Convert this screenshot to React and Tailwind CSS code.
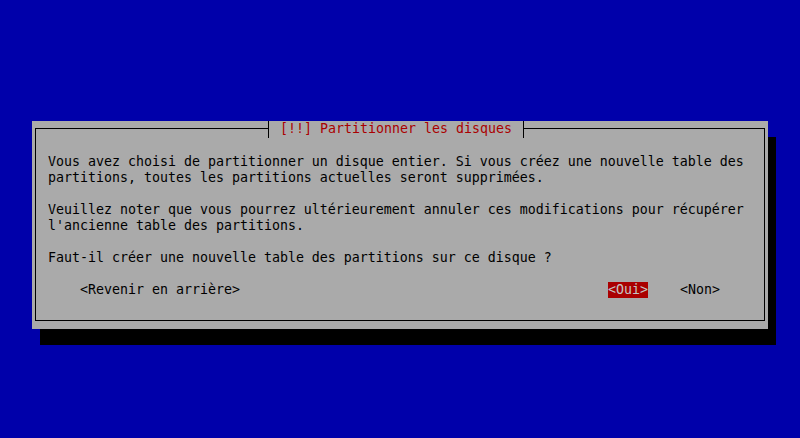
const MONO = "font-['DejaVu_Sans_Mono',monospace] text-[13.29px] leading-[16px] whitespace-pre"

const LINES = [
  'Vous avez choisi de partitionner un disque entier. Si vous créez une nouvelle table des',
  'partitions, toutes les partitions actuelles seront supprimées.',
  '',
  'Veuillez noter que vous pourrez ultérieurement annuler ces modifications pour récupérer',
  "l'ancienne table des partitions.",
  '',
  'Faut-il créer une nouvelle table des partitions sur ce disque ?',
  '',
]

export default function App() {
  return (
    <div className={`w-[800px] h-[438px] bg-[#0000aa] pt-[121px] pl-[32px] overflow-hidden ${MONO}`}>
      {/* dialog window with its text-mode shadow */}
      <div className="w-[736px] h-[208px] bg-[#aaaaaa] shadow-[8px_16px_0_0_#000] pt-[7px] pl-[3px]">
        <div className="relative w-[730px] h-[193px] border border-black pt-[25px] pl-[12px] text-black">
          {/* title breaks the top frame line */}
          <div className="absolute left-[232px] top-[-8px] h-[17px] bg-[#aaaaaa] border-l border-r border-black px-[3px] text-[#aa0000]">
            {' [!!] Partitionner les disques '}
          </div>

          {LINES.map((line, i) => (
            <div key={i} className="h-[16px]">{line}</div>
          ))}

          <div className="flex h-[16px]">
            <span className="ml-[32px]">{'<Revenir en arrière>'}</span>
            <span className="ml-[368px] bg-[#aa0000] text-[#c4c4c4]">{'<Oui>'}</span>
            <span className="ml-[32px]">{'<Non>'}</span>
          </div>
        </div>
      </div>
    </div>
  )
}
